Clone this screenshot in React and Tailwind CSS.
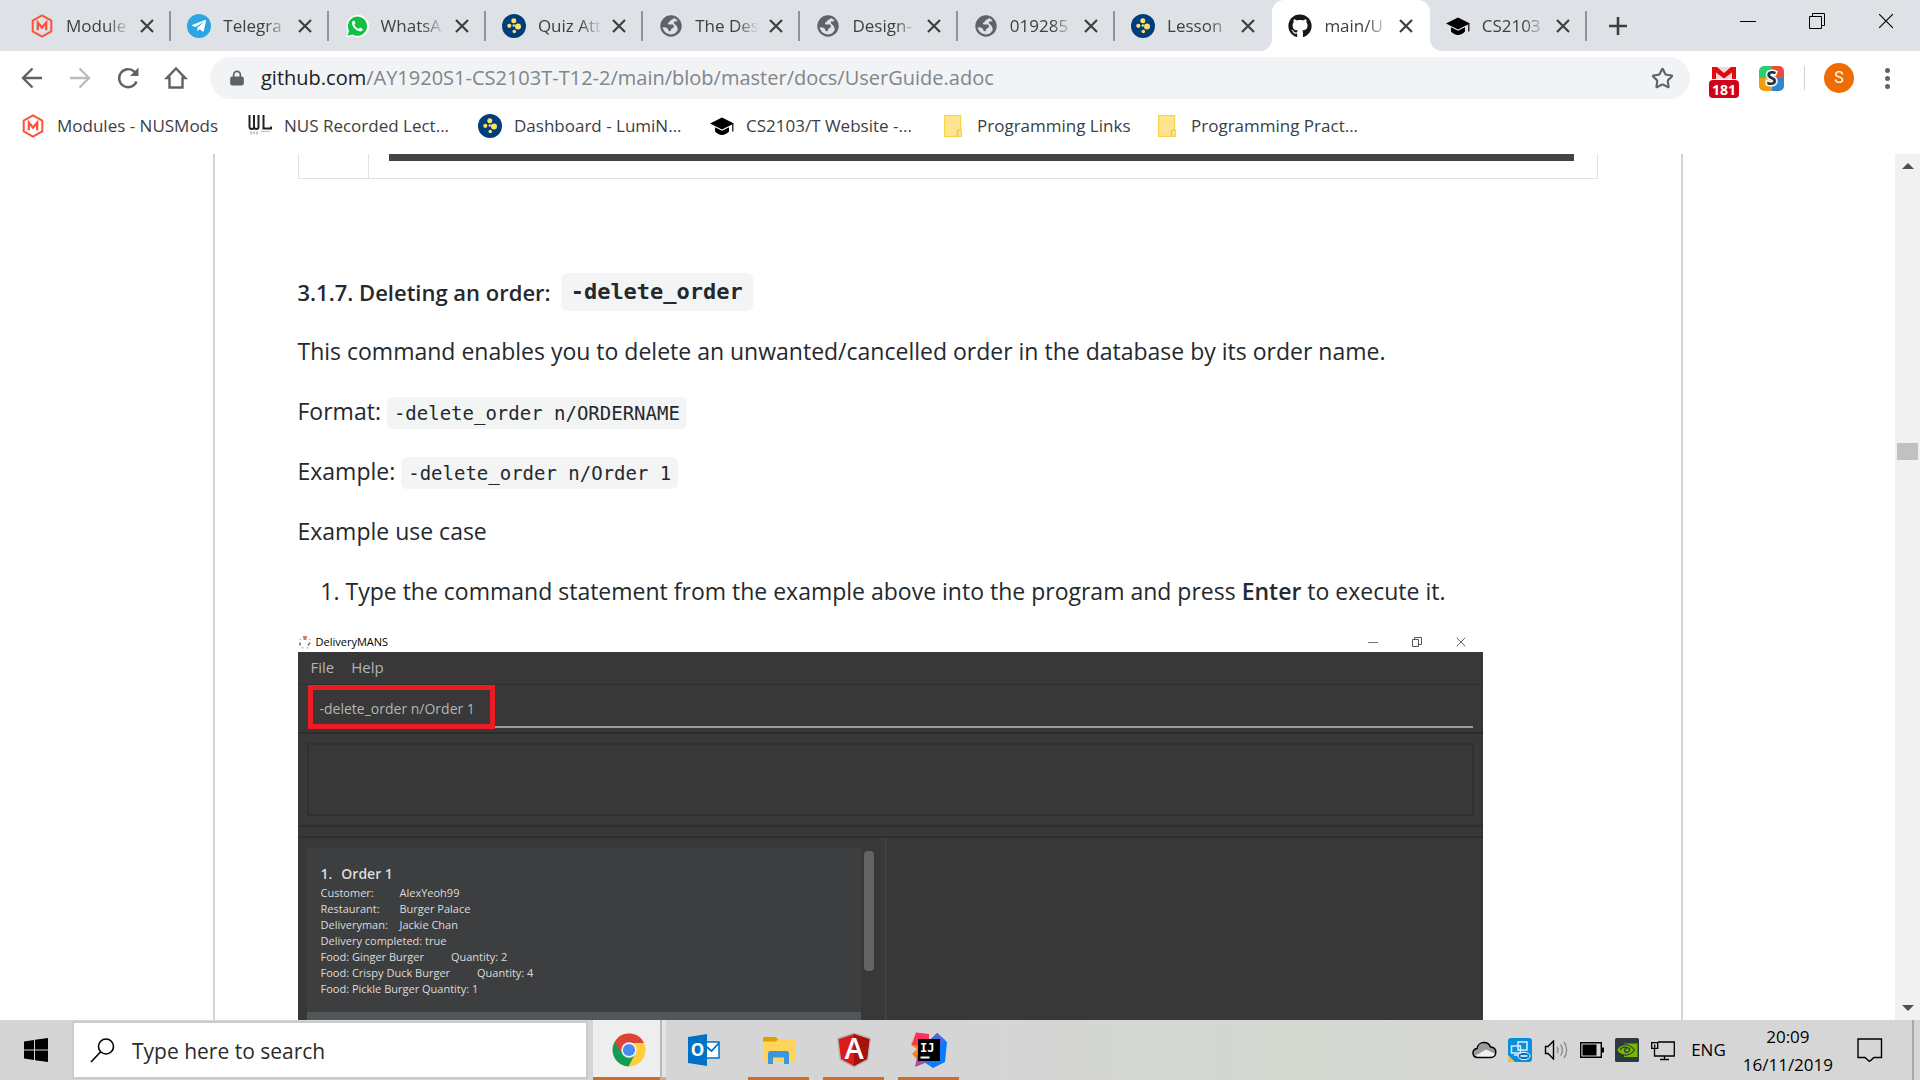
import React from "react";
import { FaGithub, FaTelegramPlane } from "react-icons/fa";
import { Star, Lock } from "lucide-react";

function NusMods({ className }) {
  return (
    <svg viewBox="0 0 24 24" className={className} fill="none" stroke="#ff5138" strokeWidth="2" aria-hidden="true">
      <path d="M12 1.4 21.3 6.6v10.8L12 22.6 2.7 17.4V6.6z" strokeLinejoin="round" />
      <path d="M7.8 16.2V8.6l4.2 5 4.2-5v7.6" strokeWidth="2.3" />
    </svg>
  );
}

function Telegram() {
  return (
    <span className="flex size-6 items-center justify-center rounded-full bg-[#2ca5e0] text-white">
      <FaTelegramPlane className="size-4" />
    </span>
  );
}

function WhatsApp() {
  return (
    <svg viewBox="0 0 24 24" className="size-6" aria-hidden="true">
      <path d="M1 23.5 2.6 17A11.3 11.3 0 1 1 7.3 22z" fill="#fff" />
      <path d="M2.6 21.8 4 16.8a9.6 9.6 0 1 1 3.6 3.7z" fill="#12c143" />
      <path
        d="M8.9 6.4c-.8 0-2 1-2 2.700 0 3.600 4.700 8.300 8.200 8.300 1.700 0 2.700-1.100 2.700-2.200 0-.5-.2-.7-2.600-1.800-.6-.2-1 1.500-1.700 1.300-1.700-.6-3.500-2.400-4-3.800-.2-.6 1-1.100.9-1.700-.5-1.800-.9-2.800-1.500-2.800z"
        fill="#fff"
      />
    </svg>
  );
}

function LumiNus({ className }) {
  return (
    <svg viewBox="0 0 24 24" className={className} aria-hidden="true">
      <circle cx="12" cy="12" r="12" fill="#003d7c" />
      <g fill="#ffe066">
        <circle cx="11.800" cy="6.800" r="2.500" />
        <circle cx="7.300" cy="11.800" r="2.100" />
        <circle cx="16" cy="12.500" r="3" />
        <circle cx="12.300" cy="17.500" r="1.800" />
        <circle cx="11.800" cy="11.500" r="1.200" />
      </g>
    </svg>
  );
}

function Globe() {
  return (
    <svg viewBox="0 0 24 24" className="size-6" aria-hidden="true">
      <circle cx="12" cy="12" r="9.600" fill="#dee1e6" stroke="#5f6368" strokeWidth="2.200" />
      <path d="M2 13C1.500 6 7 1.500 13 1.800l2 1.500c.3 1.500-1 2-2.500 2.400C11 6.200 11 8 9.500 8.400c-1 .4-.5 2 .5 2h4c1.200.6 1.300 2.600.2 3.400-1.200.6-2 .8-2.200 2.200-.5 1.800-2.600 1.500-2.800-.2-.2-1.500-1.200-2.200-2.700-2.400z" fill="#5f6368" />
      <path d="M15 7.500c2 0 4-.6 5.500-1.300 2.500 3.500 2 9-1 12.500-1.300 1.300-3 2.500-5 3 .5-1.200 2-1.700 2.500-3.200.3-1.200 1.700-1.200 1.700-2.700 0-1.800-.7-3.300-1.700-4.500-1.200-1.100-2.700-1.800-2-3.800z" fill="#5f6368" />
    </svg>
  );
}

function GradCap({ className }) {
  return (
    <svg viewBox="0 0 24 24" className={className} aria-hidden="true">
      <path d="M12 3.500 24 9.500 12 15.500 0 9.500z" />
      <path d="M5 13.200v4.300c2 2.200 4.500 3.500 7 3.500s5-1.300 7-3.500v-4.300l-7 3.600z" />
      <path d="M22.800 10v7.500" stroke="#000" strokeWidth="1.200" />
    </svg>
  );
}

function Folder() {
  return (
    <svg viewBox="0 0 18 22" className="h-[22px] w-[18px]" aria-hidden="true">
      <path d="M.6.600h16v14.400h.8v6.400H.600z" fill="#fee48f" stroke="#f9d54c" strokeWidth="1.200" />
      <path d="M13.500 21v-4.500c0-1.200.8-1.600 1.600-1.600h1.500" fill="none" stroke="#f0c53a" strokeWidth="1.300" />
    </svg>
  );
}

function LectureIcon() {
  return (
    <svg viewBox="0 0 24 24" className="size-6" fill="none" aria-hidden="true">
      <path d="M1.500 1v11.500c0 1.500.8 2.500 2.300 2.500S6 14 6 12.500V1m0 11.500C6 14 7 15 8.300 15s2.200-1 2.200-2.500V1" stroke="#222" strokeWidth="2" />
      <path d="M15.500 1v13.500H23v-2" stroke="#222" strokeWidth="2" />
      <path d="M3 17.500v3" stroke="#e79b9b" strokeWidth="1.500" />
      <path d="M6 17.500v2.500" stroke="#b8a0d0" strokeWidth="1.500" />
      <path d="M9 17.500v3" stroke="#93c793" strokeWidth="1.500" />
      <path d="M13 17.500h9" stroke="#c8b8dc" strokeWidth="1.200" />
    </svg>
  );
}

function Cross({ className, width = 2 }) {
  return (
    <svg viewBox="0 0 14 14" className={className} fill="none" stroke="currentColor" strokeWidth={width} aria-hidden="true">
      <path d="M1 1l12 12M13 1 1 13" />
    </svg>
  );
}

const tabs = [
  { title: "Module", icon: <NusMods className="size-6" /> },
  { title: "Telegra", icon: <Telegram /> },
  { title: "WhatsA", icon: <WhatsApp /> },
  { title: "Quiz Att", icon: <LumiNus className="size-6" /> },
  { title: "The Des", icon: <Globe /> },
  { title: "Design-", icon: <Globe /> },
  { title: "019285", icon: <Globe /> },
  { title: "Lesson", icon: <LumiNus className="size-6" />, plain: true },
  { title: "main/U", icon: <FaGithub className="size-6 text-[#191717]" />, active: true },
  { title: "CS2103", icon: <GradCap className="size-6" /> },
];

function Tab({ title, icon, active, plain }) {
  return (
    <div className={active ? "relative flex h-full min-w-0 flex-1 items-center rounded-t-xl bg-white pl-4" : "relative flex h-full min-w-0 flex-1 items-center pl-4"}>
      {active && (
        <>
          <span className="absolute bottom-0 right-full size-3 bg-white"><span className="block size-full rounded-br-xl bg-[#dee1e6]" /></span>
          <span className="absolute bottom-0 left-full size-3 bg-white"><span className="block size-full rounded-bl-xl bg-[#dee1e6]" /></span>
        </>
      )}
      <button className="flex min-w-0 flex-1 items-center gap-3">
        <span className="shrink-0">{icon}</span>
        <span className="flex-1 whitespace-nowrap text-left text-[17px] text-[#3c4043] [mask-image:linear-gradient(to_right,black_65%,transparent)]">{title}</span>
      </button>
      <button aria-label={"Close " + title} className="ml-[10px] mr-[17px] shrink-0 text-[#3c4043]"><Cross className="size-[14px]" width={2.2} /></button>
      {!active && !plain && <span className="absolute right-0 h-[30px] w-[2px] bg-[#919499]" />}
    </div>
  );
}

function TabStrip() {
  return (
    <header className="flex h-[51px] shrink-0 items-stretch justify-between bg-[#dee1e6] pl-[14px]">
      <div className="flex min-w-0 flex-1 items-center">
        <div className="flex h-full w-full max-w-[1573px] items-center">{tabs.map((t) => <Tab key={t.title} {...t} />)}</div>
        <button aria-label="New tab" className="ml-[22px] shrink-0">
          <svg viewBox="0 0 18 18" className="size-[18px]" stroke="#3c4043" strokeWidth="2.600" aria-hidden="true"><path d="M9 0v18M0 9h18" /></svg>
        </button>
      </div>
      <div className="flex shrink-0 items-start gap-[53px] pr-[26px] pt-[13px]">
        <button aria-label="Minimize" className="flex h-4 w-4 items-center"><span className="h-px w-full bg-black" /></button>
        <button aria-label="Restore">
          <svg viewBox="0 0 16 16" className="size-4" fill="none" stroke="#000" aria-hidden="true"><path d="M.5 3.500h12v12H.5zM3.500 3.500v-3h12v12h-3" /></svg>
        </button>
        <button aria-label="Close window"><Cross className="size-4" width={1} /></button>
      </div>
    </header>
  );
}

function NavIcon({ label, className, children }) {
  return (
    <button aria-label={label} className={className}>
      <svg viewBox="0 0 24 24" className="size-6" fill="none" stroke="currentColor" strokeWidth="2.400" aria-hidden="true">{children}</svg>
    </button>
  );
}

function Toolbar() {
  return (
    <div className="flex h-[54px] shrink-0 items-center gap-6 pl-[20px] pr-[25px] text-[#5f6368]">
      <NavIcon label="Back"><path d="M22 12H3.500M12.500 2.500 3 12l9.500 9.500" /></NavIcon>
      <NavIcon label="Forward" className="text-[#babcbe]"><path d="M2 12h18.500M11.500 2.500 21 12l-9.500 9.500" /></NavIcon>
      <NavIcon label="Reload">
        <path d="M20.500 15.500A9 9 0 1 1 18.500 5.800l1.500 1.500" />
        <path d="M22.500 1.500V10H14z" fill="currentColor" stroke="none" />
      </NavIcon>
      <NavIcon label="Home"><path d="M5.500 21.500V12H2.800L12 2.500 21.200 12h-2.700v9.500z" /></NavIcon>
      <div className="-ml-[2px] flex h-[42px] min-w-0 flex-1 items-center rounded-full bg-[#f1f3f4] pl-[19px] pr-4">
        <Lock className="size-[16px] shrink-0 fill-[#5f6368] [&_path]:fill-none" strokeWidth={2.500} />
        <span role="textbox" className="ml-[16px] flex-1 truncate text-[20px] text-[#80868b]" aria-label="Address"><span className="text-[#202124]">github.com</span>/AY1920S1-CS2103T-T12-2/main/blob/master/docs/UserGuide.adoc</span>
        <button aria-label="Bookmark this page"><Star className="size-[23px]" strokeWidth={2.200} /></button>
      </div>
      <div className="-ml-[6px] flex items-center">
        <button aria-label="Mail, 181 unread" className="flex h-[30px] w-[32px] flex-col items-center pt-1">
          <svg viewBox="0 0 24 12" className="h-[12px] w-[24px] shrink-0" aria-hidden="true">
            <path d="M0 0h24v12H0z" fill="#f3dada" />
            <path d="M0 0h5l7 6 7-6h5v12h-4V5.500l-8 6-8-6V12H0z" fill="#df0a12" />
          </svg>
          <span className="mt-px flex h-[18px] w-[30px] shrink-0 items-center justify-center rounded-[4px] bg-[#d0021b] text-[14px] font-bold text-white">181</span>
        </button>
        <button aria-label="Extension" className="relative ml-[19px] size-[25px] overflow-hidden rounded-[5px]">
          <span className="grid size-full grid-cols-2 grid-rows-2"><i className="bg-[#2ecc71]" /><i className="bg-[#e74c3c]" /><i className="bg-[#f39c12]" /><i className="bg-[#2e86d0]" /></span>
          <span className="absolute inset-0 flex items-center justify-center text-[19px] font-bold leading-none text-[#1f3247] [paint-order:stroke] [-webkit-text-stroke:3px_white]">S</span>
        </button>
        <span className="ml-[20px] h-6 w-px bg-[#cfd1d4]" />
        <button className="ml-[19px] flex size-[30px] items-center justify-center rounded-full bg-[#ef6c00] font-['Roboto'] text-[16px] text-white">S</button>
        <button aria-label="Menu" className="ml-[25px] flex w-4 flex-col items-center gap-[3px]"><i className="size-[5px] rounded-full bg-[#5f6368]" /><i className="size-[5px] rounded-full bg-[#5f6368]" /><i className="size-[5px] rounded-full bg-[#5f6368]" /></button>
      </div>
    </div>
  );
}

const bookmarks = [
  { text: "Modules - NUSMods", icon: <NusMods className="size-6" />, w: "w-[227px]" },
  { text: "NUS Recorded Lect...", icon: <LectureIcon />, w: "w-[230px]" },
  { text: "Dashboard - LumiN...", icon: <LumiNus className="size-6" />, w: "w-[232px]" },
  { text: "CS2103/T Website -...", icon: <GradCap className="size-6" />, w: "w-[231px]" },
  { text: "Programming Links", icon: <Folder />, w: "w-[214px]" },
  { text: "Programming Pract...", icon: <Folder />, w: "w-[210px]" },
];

function Bookmarks() {
  return (
    <nav className="flex h-[49px] shrink-0 items-center pb-[7px] pl-[21px]">
      {bookmarks.map((b) => (
        <a key={b.text} href="#" className={"flex items-center gap-3 whitespace-nowrap text-[17px] text-[#3c4043] " + b.w}>
          <span className="flex w-6 shrink-0 justify-center">{b.icon}</span>{b.text}
        </a>
      ))}
    </nav>
  );
}

function Code({ children }) {
  return <code className="rounded-md bg-[#f3f4f4] px-[7px] py-[5px] font-['DejaVu_Sans_Mono',monospace] text-[19px] leading-none">{children}</code>;
}

const details = [["Customer:", "AlexYeoh99"], ["Restaurant:", "Burger Palace"], ["Deliveryman:", "Jackie Chan"]];

function DeliveryWindow() {
  return (
    <div className="w-full max-w-[1185px] text-[#b4b4b4]">
      <div className="flex h-[19px] items-center justify-between pr-[17px] text-black">
        <div className="flex items-center gap-1 text-[11px]">
          <svg viewBox="0 0 14 14" className="size-[14px]" aria-hidden="true">
            <path d="M5 1h4v2H5zM5.500 3h3v2h-3z" fill="#c08560" />
            <path d="M1.500 5 3 4M12.500 5 11 4M4 12l1 1.500M10 12l-1 1.500" stroke="#9cc4d8" strokeWidth="1.500" />
            <path d="M2 7.500v3M12 7.500l-2 3" stroke="#b96a52" strokeWidth="1.800" />
          </svg>
          DeliveryMANS
        </div>
        <div className="flex items-center gap-[34px] text-[#555]">
          <span className="h-px w-[10px] bg-[#777]" />
          <svg viewBox="0 0 10 10" className="size-[10px]" fill="none" stroke="currentColor" aria-hidden="true"><path d="M.5 2.500h6v7h-6zM2.500 2.500v-2h7v7h-3" /></svg>
          <Cross className="size-[10px]" width={1.300} />
        </div>
      </div>
      <div className="bg-[#383838]">
        <div className="flex h-[33px] items-center gap-[17px] border-b border-[#2f2f2f] pl-[13px] text-[15px]"><button>File</button><button>Help</button></div>
        <div className="h-[49px] border-b-2 border-[#2d2d2d] px-[10px]">
          <div className="h-[43px] border-b-2 border-[#9a9a9a]">
            <input aria-label="Command" defaultValue="-delete_order n/Order 1" className="h-[44px] w-[187px] border-[5px] border-[#ed1c24] bg-[#383838] px-[7px] pt-[3px] text-[14px]" />
          </div>
        </div>
        <div className="border-b-2 border-[#2f2f2f] px-[9px] py-[9px]"><div className="h-[73px] border-2 border-[#303030]" /></div>
        <div className="h-[11px] border-b-2 border-[#2f2f2f]" />
        <div className="flex">
          <div className="flex w-[49.7%] border-r border-[#484848] pl-[9px] pr-[11px] pt-[10px]">
            <div className="flex-1">
              <div className="h-[164px] bg-[#3c3e3f] px-[14px] pt-[15px] text-[#dcdcdc]">
                <h5 className="flex gap-[9px] text-[14px] font-semibold leading-[22px]"><span>1.</span><span>Order 1</span></h5>
                <div className="text-[11px] leading-4">
                  {details.map(([k, v]) => <p key={k} className="grid grid-cols-[79px_1fr]"><span>{k}</span><span>{v}</span></p>)}
                  <p>Delivery completed: true</p>
                  <p className="flex gap-[27px]"><span>Food: Ginger Burger</span><span>Quantity: 2</span></p>
                  <p className="flex gap-[27px]"><span>Food: Crispy Duck Burger</span><span>Quantity: 4</span></p>
                  <p>Food: Pickle Burger Quantity: 1</p>
                </div>
              </div>
              <div className="h-[160px] bg-[#515658]" />
            </div>
            <div className="ml-[3px] mt-[3px] h-[120px] w-[10px] rounded-[4px] bg-[#646464]" />
          </div>
        </div>
      </div>
    </div>
  );
}

function Page() {
  return (
    <div className="flex min-h-0 flex-1 overflow-hidden">
      <main className="min-w-0 flex-1 overflow-hidden text-[23px] leading-[36px] text-[#24292e]">
        <div className="mx-auto w-full max-w-[1470px] border-x-2 border-[#d1d5da] px-[83px]">
          <table className="w-full border-collapse border border-t-0 border-[#dfe2e5]">
            <tbody><tr>
              <td className="w-[70px] border-r border-[#dfe2e5]" />
              <td className="h-6 pl-[20px] pr-[23px] align-top"><div className="h-[7px] bg-[#444]" /></td>
            </tr></tbody>
          </table>
          <h4 className="mt-[94px] flex items-center gap-[10px] text-[22px] font-semibold leading-[38px]">3.1.7. Deleting an order:
            <code className="rounded-md bg-[#f3f4f4] px-[10px] font-['DejaVu_Sans_Mono',monospace] font-bold">-delete_order</code>
          </h4>
          <p className="mt-[22px]">This command enables you to delete an unwanted/cancelled order in the database by its order name.</p>
          <p className="mt-6">Format: <Code>-delete_order n/ORDERNAME</Code></p>
          <p className="mt-6">Example: <Code>-delete_order n/Order 1</Code></p>
          <p className="mt-6">Example use case</p>
          <ol className="mt-6 list-decimal pl-12"><li>Type the command statement from the example above into the program and press <strong className="font-semibold">Enter</strong> to execute it.</li></ol>
          <div className="mt-6 leading-normal"><DeliveryWindow /></div>
        </div>
      </main>
      <aside className="flex w-[25px] shrink-0 flex-col items-center bg-[#f1f1f1] py-[9px]" aria-label="Scroll bar">
        <svg viewBox="0 0 12 6" className="h-[6px] w-[12px]" aria-hidden="true"><path d="M6 0 12 6H0z" fill="#505050" /></svg>
        <span className="mt-[274px] h-[17px] w-[21px] bg-[#c1c1c1]" />
        <svg viewBox="0 0 12 6" className="mt-auto h-[6px] w-[12px]" aria-hidden="true"><path d="M6 6 12 0H0z" fill="#505050" /></svg>
      </aside>
    </div>
  );
}

const svgText = "font-['Open_Sans',sans-serif] font-bold";

function Chrome() {
  return (
    <svg viewBox="0 0 34 34" className="size-[34px]" aria-hidden="true">
      <circle cx="17" cy="17" r="16.500" fill="#ffcd40" />
      <path d="M17 17 2.700 8.800A16.500 16.500 0 0 0 16.500 33.500L23 21z" fill="#0f9d58" />
      <path d="M2.700 8.800A16.500 16.500 0 0 1 32 10H17l-7.600 10z" fill="#db4437" />
      <circle cx="17" cy="17" r="7.700" fill="#f1f1f1" />
      <circle cx="17" cy="17" r="6.100" fill="#4a8af4" />
    </svg>
  );
}
function Outlook() {
  return (
    <svg viewBox="0 0 34 34" className="size-[34px]" aria-hidden="true">
      <path d="M18 9h14v16H18z" fill="#fff" stroke="#0072c6" strokeWidth="1.500" />
      <path d="M18 12.500 24.500 18 32 10" fill="none" stroke="#0072c6" strokeWidth="1.800" />
      <path d="M1 4 20 1v32L1 30z" fill="#0072c6" />
      <text x="10.500" y="23" textAnchor="middle" fontSize="17" fill="#fff" className={svgText}>O</text>
    </svg>
  );
}
function Explorer() {
  return (
    <svg viewBox="0 0 34 34" className="size-[34px]" aria-hidden="true">
      <path d="M1 5.500C1 4.500 1.800 4 2.500 4H14l2 2.500-2 2.500H1z" fill="#e0a000" />
      <path d="M1 8.500h13L16.500 6H33v23H1z" fill="#ffd35c" />
      <path d="M6 31V20.500C6 18.800 7 18 8.500 18h16c1.500 0 2.500.8 2.500 2.500V31h-5v-6.500H11V31z" fill="#3b97dc" />
    </svg>
  );
}
function Angular() {
  return (
    <svg viewBox="0 0 36 36" className="size-9" aria-hidden="true">
      <path d="M18 .5 35 6l-2.700 22L18 35.500 3.700 28 1 6z" fill="#b3b3b3" />
      <path d="M18 2 33.500 7.300 31 27 18 34 5 27 2.500 7.300z" fill="#dd1b16" />
      <path d="M18 2 33.500 7.300 31 27 18 34z" fill="#a6120d" />
      <text x="18" y="26.500" textAnchor="middle" fontSize="29" fill="#fff" className="font-['Open_Sans',sans-serif] font-semibold">A</text>
    </svg>
  );
}
function IntelliJ() {
  return (
    <svg viewBox="0 0 36 36" className="size-9" aria-hidden="true">
      <path d="M5 1l13 2-3 12-7 14-7-7 5-5-6-4z" fill="#fc801d" />
      <path d="M5 .5 18 2v12L1 13z" fill="#fe315d" />
      <path d="M7 20h12v9L4 35z" fill="#b24aa0" />
      <path d="M18 9l8-8 10 9-2 20-12 6-9-6z" fill="#087cfa" />
      <path d="M18 9l8-8 8 7-8 8z" fill="#4a6cd6" />
      <path d="M7 7h22v22H7z" fill="#000" />
      <text x="9" y="19.500" fontSize="12" fill="#fff" className="font-['DejaVu_Sans_Mono',monospace] font-bold">IJ</text>
      <path d="M9.500 24.500h9v2h-9z" fill="#fff" />
    </svg>
  );
}

const apps = [
  { name: "Outlook", icon: <Outlook /> },
  { name: "File Explorer", icon: <Explorer />, open: true },
  { name: "Angular", icon: <Angular />, open: true },
  { name: "IntelliJ IDEA", icon: <IntelliJ />, open: true },
];

function Tray() {
  return (
    <div className="ml-auto flex shrink-0 items-center text-[17px] text-black">
      <svg viewBox="0 0 25 18" className="h-[18px] w-[25px]" aria-label="OneDrive">
        <path d="M6 16.500C3 16.500 1 14.600 1 12c0-2.200 1.500-4 4-4.400C5.500 4 8.500 1.500 12 1.500c3 0 5.500 1.700 6.500 4.400 3.200.3 5.300 2.500 5.300 5.300 0 3-2.200 5.300-5 5.300z" fill="#9b9b9b" />
        <path d="M3 15 14 8.500 23.500 13c-.8 2-2.500 3.300-4.700 3.500H6C4.800 16.500 3.800 16 3 15z" fill="#efefef" />
        <path d="M6 16.500C3 16.500 1 14.600 1 12c0-2.200 1.500-4 4-4.400C5.500 4 8.500 1.500 12 1.500c3 0 5.500 1.700 6.500 4.400 3.200.3 5.300 2.500 5.300 5.300 0 3-2.200 5.300-5 5.300z" fill="none" stroke="#000" strokeWidth="1.500" />
      </svg>
      <svg viewBox="0 0 24 24" className="ml-[11px] size-6" aria-label="Graphics">
        <rect width="24" height="24" rx="3" fill="#0a8fe0" />
        <path d="M0 17l7 7H3a3 3 0 0 1-3-3z" fill="#f2c14a" />
        <path d="M10 4h9v8h-9zM3.500 8h9v7h-9zM6 17h6" fill="#0a8fe0" stroke="#d8efff" strokeWidth="1.500" />
        <ellipse cx="16" cy="18" rx="6" ry="3.700" fill="#0a6fc0" stroke="#fff" />
        <path d="M12.500 18h7" stroke="#fff" strokeWidth="1.500" />
      </svg>
      <svg viewBox="0 0 24 20" className="ml-[12px] h-5 w-6" fill="none" stroke="#000" strokeWidth="1.400" aria-label="Volume">
        <path d="M1.500 6.500H4L9.500 1v18L4 13.500H1.500z" />
        <path d="M13 7c1.300 1.800 1.300 4.200 0 6M16.500 4.500c2.500 3.200 2.500 7.800 0 11M20 2c3.500 4.500 3.500 11.500 0 16" stroke="#8f8f8f" />
      </svg>
      <svg viewBox="0 0 24 16" className="ml-[12px] h-4 w-6" aria-label="Battery">
        <path d="M.7.700h20.600v14.600H.700z" fill="none" stroke="#000" strokeWidth="1.400" />
        <path d="M2.500 2.500h14v11h-14zM21.500 5.500H24v5h-2.500z" />
      </svg>
      <svg viewBox="0 0 24 24" className="ml-[11px] size-6" aria-label="NVIDIA">
        <rect width="24" height="24" rx="1.500" fill="#2f3942" />
        <path d="M9 5.500h13.500v13.500H9z" fill="#76b900" />
        <path d="M1.500 12C4 7.500 8 6 13 7c3 1 5 3 6.500 5-3 4-6.500 5.500-10.500 5-3.500-.5-6-2.500-7.500-5z" fill="#76b900" stroke="#2f3942" strokeWidth="1.200" />
        <path d="M5 12c2-3 6-4 9-1.500 1 1 1 2-.5 3-2 1.500-4 .5-4-1.500 0-1.200 1.500-1.800 2.500-1" fill="none" stroke="#2f3942" strokeWidth="1.300" />
      </svg>
      <svg viewBox="0 0 24 22" className="ml-[12px] h-[22px] w-6" fill="none" stroke="#000" strokeWidth="1.300" aria-label="Network">
        <path d="M7 3h16.300v14H3.500V9.500M13.500 17v3.500M9 20.500h9M.7 3.700h6v5.600h-6zM3.700 5.500v3" />
      </svg>
      <span className="ml-[16px]">ENG</span>
      <div className="ml-[17px] pt-px text-center leading-[28px]"><div>20:09</div><div>16/11/2019</div></div>
      <button aria-label="Notifications" className="ml-6 mr-[29px]">
        <svg viewBox="0 0 26 24" className="h-6 w-[26px]" fill="none" stroke="#000" strokeWidth="1.400" aria-hidden="true"><path d="M1 1h23.500v18.500H17L12.500 23.500 8 19.500H1z" /></svg>
      </button>
      <span className="mr-[6px] h-[60px] w-[2px] bg-[#a9a9a9]" />
    </div>
  );
}

function Taskbar() {
  return (
    <footer className="flex h-[60px] shrink-0 items-center bg-linear-to-r from-[#d5d5d5] from-50% via-[#d4d8d0] via-68% to-[#d6d6d6] to-80%">
      <button aria-label="Start" className="flex h-full w-[72px] shrink-0 items-center justify-center">
        <svg viewBox="0 0 24 24" className="size-6" aria-hidden="true"><path d="M0 3.500 10 2v9.500H0zM11 1.800 24 0v11.500H11zM0 12.500h10V22L0 20.500zM11 12.500h13V24l-13-1.800z" /></svg>
      </button>
      <label className="flex h-[58px] w-[516px] items-center gap-[17px] border-2 border-[#cbcbcb] bg-white pl-4">
        <svg viewBox="0 0 25 25" className="size-[25px] shrink-0" fill="none" stroke="#000" strokeWidth="1.600" aria-hidden="true"><circle cx="16" cy="8.500" r="7.500" /><path d="M10.500 14 1 24" /></svg>
        <input placeholder="Type here to search" aria-label="Search" className="min-w-0 flex-1 bg-transparent pt-1 text-[21px] placeholder:text-[#2b2b2b]" />
      </label>
      <div className="ml-[5px] flex h-full">
        <button aria-label="Google Chrome" className="flex h-full w-[67px] items-center justify-center border-b-[3px] border-[#cc6d2b] bg-[#eeeeee] pl-1 pt-[3px]"><Chrome /></button>
        <span className="h-full w-[6px] border-b-[3px] border-l-2 border-b-[#dba583] border-l-[#b9b9b9] bg-[#e4e4e4]" />
      </div>
      <div className="ml-[7px] flex h-full gap-[14px]">
        {apps.map((a) => (
          <button key={a.name} aria-label={a.name} className={a.open ? "flex w-[61px] items-center justify-center border-b-[3px] border-[#cc6d2b] pt-[3px]" : "flex w-[61px] items-center justify-center"}>{a.icon}</button>
        ))}
      </div>
      <Tray />
    </footer>
  );
}

export default function App() {
  return (
    <div className="flex h-screen flex-col overflow-hidden bg-white font-['Open_Sans','Noto_Sans',sans-serif]">
      <TabStrip />
      <Toolbar />
      <Bookmarks />
      <Page />
      <Taskbar />
    </div>
  );
}
